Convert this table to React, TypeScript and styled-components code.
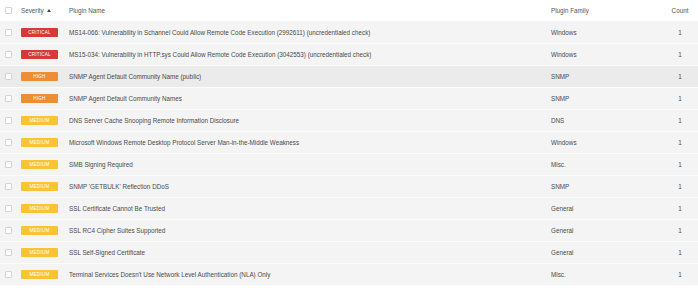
import styled, { createGlobalStyle } from "styled-components";

type Severity = "critical" | "high" | "medium";

const rows: { sev: Severity; name: string; family: string; count: number; active?: boolean }[] = [
    { sev: "critical", name: "MS14-066: Vulnerability in Schannel Could Allow Remote Code Execution (2992611) (uncredentialed check)", family: "Windows", count: 1 },
    { sev: "critical", name: "MS15-034: Vulnerability in HTTP.sys Could Allow Remote Code Execution (3042553) (uncredentialed check)", family: "Windows", count: 1 },
    { sev: "high", name: "SNMP Agent Default Community Name (public)", family: "SNMP", count: 1, active: true },
    { sev: "high", name: "SNMP Agent Default Community Names", family: "SNMP", count: 1 },
    { sev: "medium", name: "DNS Server Cache Snooping Remote Information Disclosure", family: "DNS", count: 1 },
    { sev: "medium", name: "Microsoft Windows Remote Desktop Protocol Server Man-in-the-Middle Weakness", family: "Windows", count: 1 },
    { sev: "medium", name: "SMB Signing Required", family: "Misc.", count: 1 },
    { sev: "medium", name: "SNMP 'GETBULK' Reflection DDoS", family: "SNMP", count: 1 },
    { sev: "medium", name: "SSL Certificate Cannot Be Trusted", family: "General", count: 1 },
    { sev: "medium", name: "SSL RC4 Cipher Suites Supported", family: "General", count: 1 },
    { sev: "medium", name: "SSL Self-Signed Certificate", family: "General", count: 1 },
    { sev: "medium", name: "Terminal Services Doesn't Use Network Level Authentication (NLA) Only", family: "Misc.", count: 1 },
];

const sevColors: Record<Severity, string> = {
    critical: "#d8383a",
    high: "#ee8d34",
    medium: "#f8c434",
};

const GlobalStyle = createGlobalStyle`
    body {
        margin: 0;
        background: #fff;
        font-family: "Liberation Sans", Arial, sans-serif;
    }
`;

const Table = styled.div`
    width: 698px;
    font-size: 6.3px;
    color: #4a4a4a;
`;

const Row = styled.div<{ $header?: boolean; $active?: boolean }>`
    display: grid;
    grid-template-columns: 21px 48px 482px 1fr 36px;
    align-items: center;
    height: 21px;
    background: ${(p) => (p.$header ? "#fff" : p.$active ? "#ebebeb" : "#f4f4f4")};
    border-bottom: 1px solid ${(p) => (p.$header ? "#f4f4f4" : "#fcfcfc")};
    color: ${(p) => (p.$header ? "#555" : "#4a4a4a")};
`;

const CheckCell = styled.div`
    padding-left: 5px;
    display: flex;
    align-items: center;
`;

const Checkbox = styled.span`
    display: block;
    width: 5px;
    height: 5px;
    border: 1px solid #d4d4d4;
    border-radius: 1px;
    background: #fff;
`;

const Cell = styled.div<{ $center?: boolean }>`
    white-space: nowrap;
    display: flex;
    align-items: center;
    justify-content: ${(p) => (p.$center ? "center" : "flex-start")};
`;

const Badge = styled.span<{ $sev: Severity }>`
    display: block;
    width: 37px;
    height: 9px;
    line-height: 9px;
    border-radius: 1px;
    background: ${(p) => sevColors[p.$sev]};
    color: #fff;
    font-size: 4.6px;
    text-transform: uppercase;
    text-align: center;
    letter-spacing: 0.2px;
`;

const SortArrow = styled.svg`
    margin-left: 3px;
    width: 4px;
    height: 3px;
`;

export default function App() {
    return (
        <>
            <GlobalStyle />
            <Table>
                <Row $header>
                    <CheckCell>
                        <Checkbox />
                    </CheckCell>
                    <Cell>
                        Severity
                        <SortArrow viewBox="0 0 4 3">
                            <path d="M0 3 L2 0 L4 3 Z" fill="#444" />
                        </SortArrow>
                    </Cell>
                    <Cell>Plugin Name</Cell>
                    <Cell>Plugin Family</Cell>
                    <Cell $center>Count</Cell>
                </Row>
                {rows.map((r, i) => (
                    <Row key={i} $active={r.active}>
                        <CheckCell>
                            <Checkbox />
                        </CheckCell>
                        <Cell>
                            <Badge $sev={r.sev}>{r.sev}</Badge>
                        </Cell>
                        <Cell>{r.name}</Cell>
                        <Cell>{r.family}</Cell>
                        <Cell $center>{r.count}</Cell>
                    </Row>
                ))}
            </Table>
        </>
    );
}
